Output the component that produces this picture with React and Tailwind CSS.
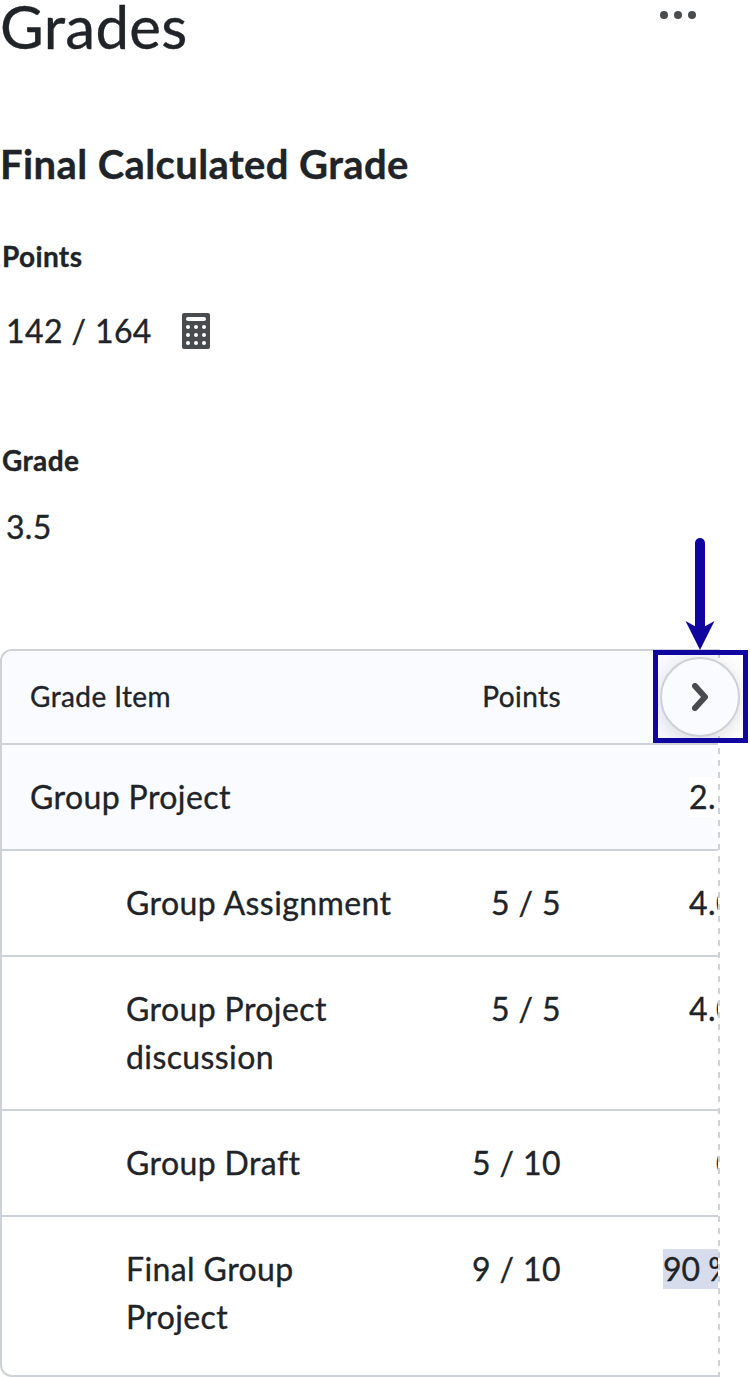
import React from 'react';

const ROWS = [
  { name: 'Group Assignment', points: '5 / 5', grade: '4.0', gradeClass: 'pl-[100px]' },
  { name: 'Group Project discussion', points: '5 / 5', grade: '4.0', gradeClass: 'pl-[100px]' },
  { name: 'Group Draft', points: '5 / 10', grade: '0', gradeClass: 'pl-[127px]' },
  { name: 'Final Group Project', points: '9 / 10', grade: '90 %', gradeClass: 'pl-[74px]', selected: true },
];

const CalculatorIcon = () => (
  <svg className="h-9 w-7" viewBox="0 0 28 36" fill="none">
    <rect width="28" height="36" rx="2" fill="#494c4e" />
    <rect x="4" y="4" width="20" height="4" rx="2" fill="white" />
    {[14, 22, 30].map((y) =>
      [6, 14, 22].map((x) => <circle key={`${x}-${y}`} cx={x} cy={y} r="2" fill="white" />)
    )}
  </svg>
);

const MoreIcon = () => (
  <svg className="h-2 w-9" viewBox="0 0 36 8" fill="#494c4e">
    <circle cx="4" cy="4" r="4" />
    <circle cx="18" cy="4" r="4" />
    <circle cx="32" cy="4" r="4" />
  </svg>
);

const GradeRow = ({ name, points, grade, gradeClass, selected }) => (
  <div className="flex border-b-2 border-[#cdd1d8] py-7 last:border-b-0">
    <div className="w-[423px] shrink-0 pl-[124px] pr-6">{name}</div>
    <div className="w-[164px] shrink-0 pr-7 text-right">{points}</div>
    <div className={`min-w-0 flex-1 overflow-hidden whitespace-nowrap ${gradeClass}`}>
      <span className={selected ? 'bg-[#d6dcec] pb-px tracking-normal' : ''}>{grade}</span>
    </div>
  </div>
);

const ScrollCallout = () => (
  <>
    <svg className="absolute left-[685px] top-[-111px] h-[112px] w-[30px]" viewBox="0 0 30 112">
      <path d="M15 5V90" stroke="#10069f" strokeWidth="10" strokeLinecap="round" />
      <path d="M0.5 83L15 91L29.5 83L15 112Z" fill="#10069f" />
    </svg>
    <div className="absolute left-[653px] top-[1px] flex h-[93px] w-[95px] items-center justify-center overflow-hidden border-[5px] border-[#10069f] pr-0.5">
      <button
        type="button"
        aria-label="Scroll right"
        className="flex h-20 w-20 shrink-0 items-center justify-center rounded-full border-2 border-[#cdd1d8] bg-[#f9fbff] shadow-[0_4px_20px_rgba(0,0,0,0.14)]"
      >
        <svg className="h-7 w-4" viewBox="0 0 16 28" fill="none">
          <path d="M3 3L13 14L3 25" stroke="#494c4e" strokeWidth="6" strokeLinecap="round" strokeLinejoin="round" />
        </svg>
      </button>
    </div>
  </>
);

const GradesTable = () => (
  <div className="relative mt-[98px]">
    <div className="flex h-[728px] w-[720px] overflow-hidden rounded-l-xl border-y-2 border-l-2 border-[#cdd1d8]">
      <div className="w-[716px] text-[32px] leading-[48px] tracking-[0.4px]">
        <div className="flex border-b-2 border-[#cdd1d8] bg-[#f9fbff] pb-[29px] pt-[27px] text-[28px] leading-9">
          <div className="w-[423px] pl-7">Grade Item</div>
          <div className="w-[164px] pr-7 text-right">Points</div>
        </div>
        <div className="flex border-b-2 border-[#cdd1d8] bg-[#f9fbff] py-7">
          <div className="w-[587px] shrink-0 pl-7">Group Project</div>
          <div className="min-w-0 flex-1 overflow-hidden whitespace-nowrap pl-[100px]">
            <span className="bg-white pb-px pr-1">2.</span>
          </div>
        </div>
        {ROWS.map((row) => (
          <GradeRow key={row.name} {...row} />
        ))}
      </div>
      <div className="w-0.5 bg-[repeating-linear-gradient(to_bottom,transparent_0px,transparent_1px,#cdd1d8_1px,#cdd1d8_7px,transparent_7px,transparent_12px)]" />
    </div>
    <ScrollCallout />
  </div>
);

export default function App() {
  return (
    <main className="h-[1377px] w-[750px] overflow-hidden bg-white font-['Lato',sans-serif] text-[#202428] [-webkit-text-stroke:0.35px_#202428]">
      <header className="flex items-start justify-between pr-[54px]">
        <h1 className="text-[60px] leading-[52px] tracking-[0.3px]">Grades</h1>
        <button type="button" aria-label="More actions" className="mt-[11px] flex">
          <MoreIcon />
        </button>
      </header>

      <h2 className="mt-[88px] text-[40px] font-bold leading-[48px] tracking-[0.4px]">Final Calculated Grade</h2>

      <h3 className="mt-12 pl-0.5 text-[28px] font-bold leading-10 tracking-[0.35px]">Points</h3>
      <div className="mt-[31px] flex items-center gap-[30px] pl-1.5 text-[32px] leading-[48px] tracking-[0.4px]">
        <span>142 / 164</span>
        <CalculatorIcon />
      </div>

      <h3 className="mt-[85px] pl-0.5 text-[28px] font-bold leading-10 tracking-[0.35px]">Grade</h3>
      <div className="mt-[23px] pl-1.5 text-[32px] leading-[48px] tracking-[0.3px]">3.5</div>

      <GradesTable />
    </main>
  );
}
